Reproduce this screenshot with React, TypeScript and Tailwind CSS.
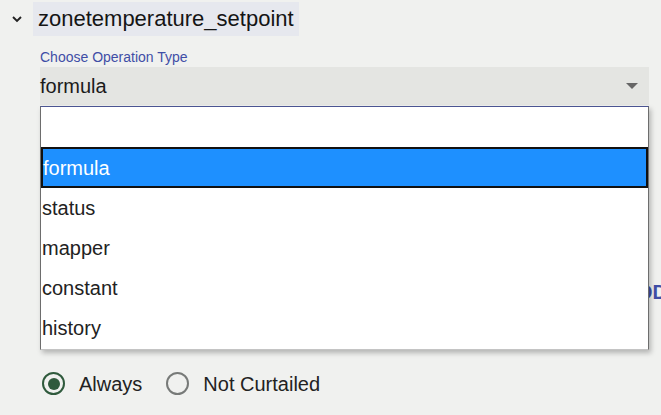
const options = ["", "formula", "status", "mapper", "constant", "history"];

function Radio({ checked, label }: { checked: boolean; label: string }) {
  return (
    <label className="flex items-center gap-[14px]">
      <span
        className={
          checked
            ? "flex h-[23px] w-[23px] items-center justify-center rounded-full border-[2.5px] border-[#2f5a3c]"
            : "flex h-[23px] w-[23px] items-center justify-center rounded-full border-[2.5px] border-[#777a78]"
        }
      >
        {checked ? <span className="h-[12px] w-[12px] rounded-full bg-[#2f5a3c]" /> : null}
      </span>
      <span className="text-[20px] leading-none text-[#222]">{label}</span>
    </label>
  );
}

export default function App() {
  const selected = "formula";

  return (
    <div
      className="relative h-[415px] w-[661px] overflow-hidden bg-[#f0f1ef] text-[#1b1b1b]"
      style={{ fontFamily: '"Liberation Sans", Arial, sans-serif' }}
    >
      <div className="flex items-center pt-[2px]">
        <svg className="ml-[11px] mr-[10px] h-[12px] w-[12px]" viewBox="0 0 12 12">
          <path d="M2 4 L6 8 L10 4" fill="none" stroke="#222" strokeWidth="1.9" />
        </svg>
        <span className="flex h-[34px] items-center bg-[#e6e8ee] px-[5px] text-[22px] leading-none text-[#151515]">
          zonetemperature_setpoint
        </span>
      </div>

      <div className="ml-[40px] w-[609px]">
        <p className="mt-[14px] text-[14px] leading-none text-[#3f4ea6]">Choose Operation Type</p>
        <div className="mt-[3px] flex h-[38px] items-center justify-between bg-[#e4e5e2] pr-[11px]">
          <span className="text-[20px] leading-none">{selected}</span>
          <svg className="h-[6px] w-[12px]" viewBox="0 0 12 6">
            <path d="M0 0 H12 L6 6 Z" fill="#666" />
          </svg>
        </div>

        <div className="mt-[175px] flex h-[23px] items-center justify-end">
          <span className="mr-[-18px] text-[20px] font-bold leading-none text-[#3f4ea6]">ADD</span>
        </div>

        <div className="mt-[69px] flex items-center gap-[24px] pl-[2px]">
          <Radio checked label="Always" />
          <Radio checked={false} label="Not Curtailed" />
        </div>
      </div>

      <ul className="absolute left-[40px] top-[106px] w-[609px] border border-t-[#4b5592] border-x-[#6d6d6d] border-b-[#c4c4c4] bg-white pb-[1px] shadow-[2px_3px_5px_rgba(0,0,0,0.25)]">
        {options.map((opt) =>
          opt === selected ? (
            <li
              key={opt}
              className="flex h-[41px] items-center border-2 border-[#111] bg-[#1e90ff] text-[20px] text-white"
            >
              {opt}
            </li>
          ) : (
            <li key={opt || "empty"} className="flex h-[40px] items-center pl-[1px] text-[20px] text-[#222]">
              {opt}
            </li>
          )
        )}
      </ul>
    </div>
  );
}
